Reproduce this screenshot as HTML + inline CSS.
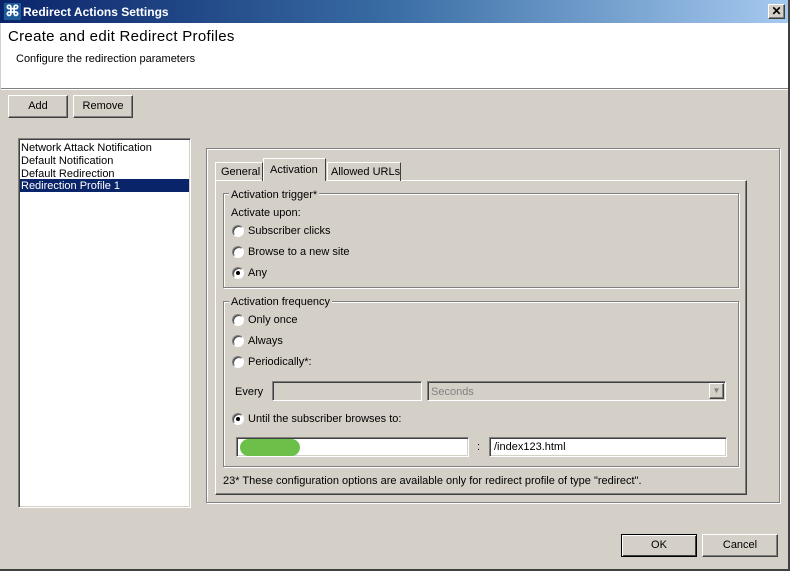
<!DOCTYPE html>
<html><head><style>
*{margin:0;padding:0;box-sizing:border-box}
body{width:790px;height:571px;background:#d4d0c8;position:relative;overflow:hidden;font-family:"Liberation Sans",sans-serif;font-size:11px;color:#000}
.a{position:absolute;white-space:nowrap}
.btn{position:absolute;background:#d4d0c8;border:1px solid;border-color:#fff #404040 #404040 #fff;box-shadow:inset -1px -1px 0 #808080;text-align:center;font-size:11px}
.sunk{position:absolute;background:#fff;border:1px solid;border-color:#808080 #fff #fff #808080;box-shadow:inset 1px 1px 0 #404040,inset -1px -1px 0 #d4d0c8}
.etch{position:absolute;border:1px solid #808080;box-shadow:1px 1px 0 #fff,inset 1px 1px 0 #fff}
.radio{position:absolute;width:12px;height:12px;border-radius:50%;background:#fff;border:1px solid;border-color:#808080 #fff #fff #808080;box-shadow:inset 1px 1px 0 #404040}
.radio.on::after{content:"";position:absolute;left:3px;top:3px;width:4px;height:4px;border-radius:50%;background:#000}
.leg{position:absolute;background:#d4d0c8;padding:0 2px;white-space:nowrap}
</style></head><body>
<div class="a" style="left:0;top:0;width:790px;height:23px;background:linear-gradient(90deg,#0a246a,#3a6ea5 50%,#a6caf0)"></div>
<div class="a" style="left:4px;top:3px;width:17px;height:17px;background:#1c5a9a;color:#fff;font-size:15px;line-height:17px;text-align:center;font-weight:bold">⌘</div>
<div class="a" style="left:23px;top:5px;color:#fff;font-weight:bold;font-size:12px">Redirect Actions Settings</div>
<div class="btn" style="left:768px;top:4px;width:17px;height:15px;font-weight:bold;font-size:12px;line-height:12px">✕</div>
<div class="a" style="left:1px;top:23px;width:788px;height:66px;background:#fff"></div>
<div class="a" style="left:8px;top:28px;font-size:15px;letter-spacing:0.3px">Create and edit Redirect Profiles</div>
<div class="a" style="left:16px;top:53px">Configure the redirection parameters</div>
<div class="a" style="left:1px;top:88px;width:788px;height:1px;background:#808080"></div>
<div class="a" style="left:1px;top:89px;width:788px;height:1px;background:#fff"></div>
<div class="btn" style="left:8px;top:95px;width:60px;height:23px;line-height:20px">Add</div>
<div class="btn" style="left:73px;top:95px;width:60px;height:23px;line-height:20px">Remove</div>
<div class="sunk" style="left:18px;top:138px;width:173px;height:370px"></div>
<div class="a" style="left:21px;top:141px;line-height:13px;padding-top:1px">Network Attack Notification<br>Default Notification<br>Default Redirection</div>
<div class="a" style="left:20px;top:179px;width:169px;height:13px;background:#0a246a;color:#fff;line-height:14px;padding-left:1px">Redirection Profile 1</div>
<div class="etch" style="left:206px;top:148px;width:574px;height:355px"></div>
<div class="a" style="left:215px;top:180px;width:532px;height:315px;border:1px solid;border-color:#fff #404040 #404040 #fff;box-shadow:inset -1px -1px 0 #808080"></div>
<div class="a" style="left:215px;top:162px;width:48px;height:19px;border:1px solid;border-bottom:none;border-color:#fff #404040 #404040 #fff;line-height:19px;padding-left:5px">General</div>
<div class="a" style="left:327px;top:162px;width:74px;height:19px;border:1px solid;border-bottom:none;border-color:#fff #404040 #404040 #fff;line-height:19px;padding-left:3px">Allowed URLs</div>
<div class="a" style="left:263px;top:158px;width:63px;height:23px;border:1px solid;border-bottom:none;border-color:#fff #404040 #404040 #fff;background:#d4d0c8;line-height:22px;padding-left:6px">Activation</div>
<div class="etch" style="left:223px;top:193px;width:516px;height:95px"></div>
<div class="leg" style="left:229px;top:189px">Activation trigger*</div>
<div class="a" style="left:231px;top:207px">Activate upon:</div>
<div class="radio" style="left:232px;top:225px"></div><div class="a" style="left:248px;top:225px">Subscriber clicks</div>
<div class="radio" style="left:232px;top:246px"></div><div class="a" style="left:248px;top:246px">Browse to a new site</div>
<div class="radio on" style="left:232px;top:267px"></div><div class="a" style="left:248px;top:267px">Any</div>
<div class="etch" style="left:223px;top:301px;width:516px;height:166px"></div>
<div class="leg" style="left:229px;top:296px">Activation frequency</div>
<div class="radio" style="left:232px;top:314px"></div><div class="a" style="left:248px;top:314px">Only once</div>
<div class="radio" style="left:232px;top:335px"></div><div class="a" style="left:248px;top:335px">Always</div>
<div class="radio" style="left:232px;top:356px"></div><div class="a" style="left:248px;top:356px">Periodically*:</div>
<div class="a" style="left:235px;top:386px">Every</div>
<div class="a" style="left:272px;top:381px;width:150px;height:20px;border:1px solid;border-color:#808080 #fff #fff #808080;box-shadow:inset 1px 1px 0 #404040"></div>
<div class="a" style="left:427px;top:381px;width:299px;height:20px;border:1px solid;border-color:#808080 #fff #fff #808080;box-shadow:inset 1px 1px 0 #404040;color:#808080;padding:4px 3px">Seconds</div>
<div class="btn" style="left:709px;top:383px;width:15px;height:16px;color:#808080;font-size:8px;line-height:14px">▼</div>
<div class="radio on" style="left:232px;top:413px"></div><div class="a" style="left:248px;top:413px">Until the subscriber browses to:</div>
<div class="sunk" style="left:236px;top:437px;width:233px;height:20px"></div>
<div class="a" style="left:240px;top:439px;width:60px;height:17px;border-radius:9px;background:#6cc04a"></div>
<div class="a" style="left:477px;top:441px">:</div>
<div class="sunk" style="left:489px;top:437px;width:238px;height:20px"></div>
<div class="a" style="left:494px;top:441px">/index123.html</div>
<div class="a" style="left:223px;top:475px">23* These configuration options are available only for redirect profile of type "redirect".</div>
<div class="btn" style="left:621px;top:534px;width:76px;height:23px;line-height:21px;border:1px solid #000;box-shadow:inset 1px 1px 0 #fff,inset -1px -1px 0 #404040">OK</div>
<div class="btn" style="left:702px;top:534px;width:76px;height:23px;line-height:21px">Cancel</div>
<div class="a" style="left:0;top:569px;width:790px;height:2px;background:#404040"></div>
<div class="a" style="left:788px;top:0;width:2px;height:571px;background:#404040"></div>
</body></html>
